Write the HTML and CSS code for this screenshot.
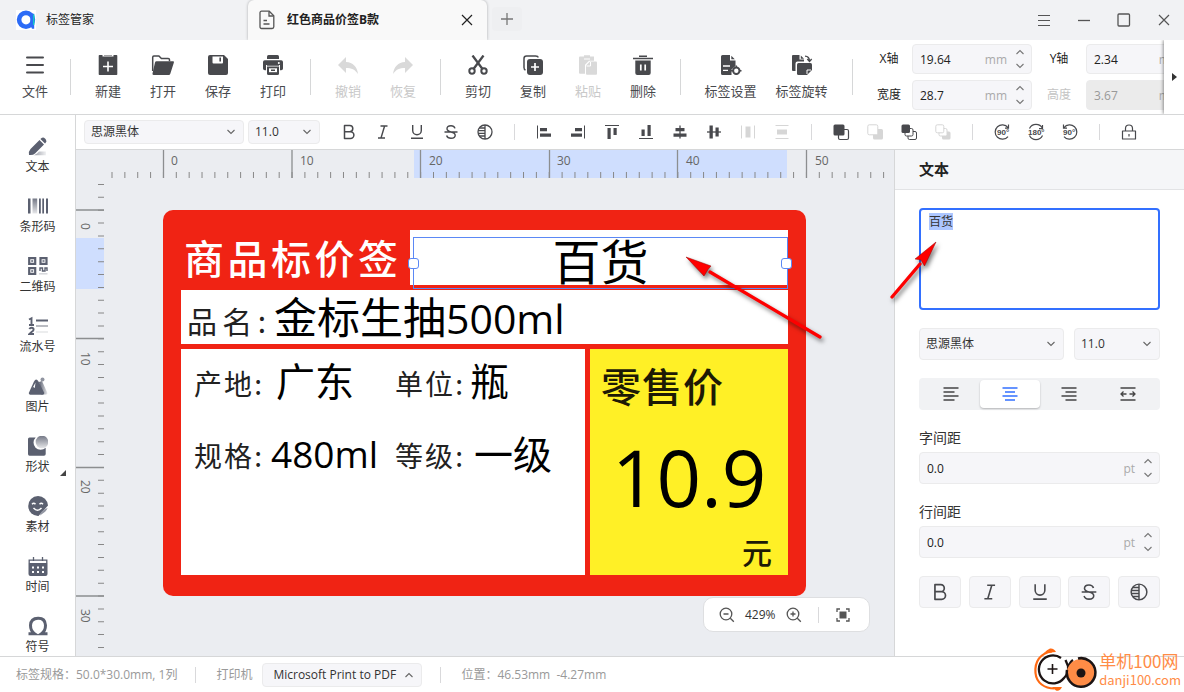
FILE: index.html
```html
<!DOCTYPE html>
<html lang="zh-CN">
<head>
<meta charset="utf-8">
<title>标签管家</title>
<link rel="stylesheet" href="styles.css">
</head>
<body>
<svg class="defs" aria-hidden="true">
  <defs>
    <linearGradient id="fade-x"><stop offset="0" stop-color="#5b6070"/><stop offset="1" stop-color="#5b6070" stop-opacity=".15"/></linearGradient>
    <linearGradient id="fade-y" x2="0" y2="1"><stop offset="0" stop-color="#5b6070" stop-opacity=".85"/><stop offset="1" stop-color="#5b6070" stop-opacity=".15"/></linearGradient>
  </defs>
  <symbol id="i-down" viewBox="0 0 10 6"><path d="M1.5 1 5 4.5 8.500 1" fill="none" stroke="currentColor" stroke-width="1.1"/></symbol>
  <symbol id="i-up" viewBox="0 0 10 6"><path d="M1.500 5 5 1.500 8.500 5" fill="none" stroke="currentColor" stroke-width="1.1"/></symbol>
  <symbol id="i-bold" viewBox="0 0 16 16"><path d="M3.500 1.500h5.200a3 3 0 0 1 0 6.200H3.500zM3.500 7.700h6a3.400 3.400 0 0 1 0 6.800h-6z" fill="none" stroke="currentColor" stroke-width="1.500" stroke-linejoin="round"/></symbol>
  <symbol id="i-italic" viewBox="0 0 16 16"><path d="M5.500 2h7M3 14h7M9.600 2 6 14" fill="none" stroke="currentColor" stroke-width="1.400"/></symbol>
  <symbol id="i-under" viewBox="0 0 16 16"><path d="M3.700 1v5.500a4.300 4.300 0 0 0 8.600 0V1M2 14.300h12" fill="none" stroke="currentColor" stroke-width="1.400"/></symbol>
  <symbol id="i-strike" viewBox="0 0 16 16"><path d="M12 4.400C11.400 2.600 9.900 1.700 8 1.700c-2.400 0-4 1.200-4 3.100 0 1.700 1.400 2.400 4 3.100M1.500 8h13M8 8c2.800.7 4.200 1.600 4.200 3.300 0 1.900-1.700 3-4.200 3-2.200 0-3.800-1-4.400-2.800" fill="none" stroke="currentColor" stroke-width="1.400"/></symbol>
  <symbol id="i-invert" viewBox="0 0 16 16"><circle cx="8" cy="8" r="7" fill="none" stroke="currentColor" stroke-width="1.300"/><path d="M8 1v14M2.500 4H8M1 6.700h7M1 9.400h7M2.500 12H8" fill="none" stroke="currentColor" stroke-width="1.300"/></symbol>
</svg>

<div class="app">
  <header class="titlebar">
    <div class="home-tab">
      <svg width="20" height="20" viewBox="0 0 20 20"><rect width="20" height="20" fill="#fff"/><circle cx="10" cy="9.800" r="6.900" fill="none" stroke="#2c6bf6" stroke-width="4.600"/><path d="M14.800 3.800h3.400v15h-2.200l-1.800-3.500z" fill="#2c6bf6"/><path d="M17 4.500h1.400V15H17z" fill="#14c8c4"/></svg>
      <span>标签管家</span>
    </div>
    <div class="doc-tab">
      <svg width="16" height="20" viewBox="0 0 16 20" fill="none" stroke="#555" stroke-width="1.300"><path d="M2.500 1.200h7.700l4.600 4.600v11a1.700 1.700 0 0 1-1.700 1.700H2.500A1.500 1.500 0 0 1 1 17V2.700a1.500 1.500 0 0 1 1.500-1.500z"/><path d="M10 1.500V6h4.500M4.500 10.500h3.500M4.500 14h6"/></svg>
      <span class="doc-name">红色商品价签B款</span>
      <button class="bare" aria-label="关闭标签"><svg width="12" height="12" viewBox="0 0 12 12"><path d="m1 1 10 10M11 1 1 11" stroke="#222" stroke-width="1.200"/></svg></button>
    </div>
    <button class="add-tab" aria-label="新标签"><svg width="12" height="12" viewBox="0 0 12 12"><path d="M6 0v12M0 6h12" stroke="#777" stroke-width="1.300"/></svg></button>
    <div class="win-controls">
      <button class="bare" aria-label="菜单"><svg width="12" height="12" viewBox="0 0 12 12"><path d="M0 1.500h12M0 6.500h12M0 11.500h12" stroke="#555" stroke-width="1.100"/></svg></button>
      <button class="bare" aria-label="最小化"><svg width="12" height="12" viewBox="0 0 12 12"><path d="M0 6.500h12" stroke="#555" stroke-width="1.300"/></svg></button>
      <button class="bare" aria-label="最大化"><svg width="14" height="14" viewBox="0 0 14 14"><rect x="1" y="1" width="11.500" height="12" rx="1" fill="none" stroke="#555" stroke-width="1.300"/></svg></button>
      <button class="bare" aria-label="关闭"><svg width="12" height="12" viewBox="0 0 12 12"><path d="m1 1 10 10M11 1 1 11" stroke="#555" stroke-width="1.200"/></svg></button>
    </div>
  </header>

  <div class="toolbar">
    <div class="toolbar-items">
      <button class="tool file"><svg viewBox="0 0 20 20"><path d="M2 2.500h16M2 10h16M2 17.500h16" stroke="currentColor" stroke-width="2" stroke-linecap="round"/></svg>文件</button>
      <i class="sep"></i>
      <div class="tools">
        <button class="tool"><svg viewBox="0 0 20 20"><path d="M1.500 0h3v1.600h11V0h3q.8 0 .8.800v18.400q0 .8-.8.800h-17q-.8 0-.8-.8V.8q0-.8.8-.8z" fill="currentColor"/><path d="M6 0h8" stroke="currentColor" stroke-width="1"/><path d="M10 6.500v10M5 11.500h10" stroke="#fff" stroke-width="1.600"/></svg>新建</button>
        <button class="tool"><svg viewBox="0 0 24 20"><path d="M1.700 16V2.200q0-1.200 1.200-1.200h5l2.500 2.500h6.800q1.300 0 1.300 1.300v1.500" fill="none" stroke="currentColor" stroke-width="1.500"/><path d="M5.500 6.200H22q1.300 0 .9 1.300l-3.600 11.200q-.4 1.200-1.500 1.200H2.500q-1.300 0-1-1.300L4 7.400q.3-1.200 1.500-1.200z" fill="currentColor"/></svg>打开</button>
        <button class="tool"><svg viewBox="0 0 20 20"><path d="M2 0h14l4 4v14q0 2-2 2H2q-2 0-2-2V2Q0 0 2 0z" fill="currentColor"/><path d="M4.500 1.500H15v6q0 1-1 1H5.500q-1 0-1-1z" fill="#fff"/><path d="M12.200 2.500v4" stroke="currentColor" stroke-width="1.600"/></svg>保存</button>
        <button class="tool"><svg viewBox="0 0 20 20"><path d="M4 4V1.500Q4 0 5.500 0h9Q16 0 16 1.500V4z" fill="currentColor"/><path d="M1.800 5.200h16.400Q20 5.200 20 7v6.500q0 1.800-1.800 1.800H17V10H3v5.300H1.800Q0 15.300 0 13.500V7q0-1.800 1.800-1.800z" fill="currentColor"/><path d="M4 11.500h12v7q0 1.500-1.500 1.500h-9Q4 20 4 18.500z" fill="currentColor"/><path d="M6 13.300h8v3.900H6z" fill="#fff"/><path d="M8 15.300h4M4 10h12" stroke="currentColor" stroke-width="1.400"/><circle cx="15.800" cy="8" r="1" fill="#fff"/></svg>打印</button>
      </div>
      <i class="sep"></i>
      <div class="tools">
        <button class="tool" disabled><svg viewBox="0 0 20 20"><path d="M8 2v5c7 .5 11 4.500 12 12-3-4.500-6.500-6-12-6v5L0 10z" fill="currentColor"/></svg>撤销</button>
        <button class="tool" disabled><svg viewBox="0 0 20 20"><path d="M12 2v5C5 7.500 1 11.500 0 19c3-4.500 6.500-6 12-6v5l8-8z" fill="currentColor"/></svg>恢复</button>
      </div>
      <i class="sep"></i>
      <div class="tools">
        <button class="tool"><svg viewBox="0 0 20 20" fill="none" stroke="currentColor"><circle cx="4" cy="16" r="2.700" stroke-width="2"/><circle cx="16" cy="16" r="2.700" stroke-width="2"/><path d="M5.500 14 15.500.5M14.500 14 4.500.5" stroke-width="2.300"/></svg>剪切</button>
        <button class="tool"><svg viewBox="0 0 20 20"><path d="M2.500 15Q1 14.500 1 12.500V3.500Q1 1 3.500 1h9Q15 1 15 2.500" fill="none" stroke="currentColor" stroke-width="1.500"/><rect x="4" y="4" width="16" height="16" rx="3" fill="currentColor"/><path d="M12 8v8M8 12h8" stroke="#fff" stroke-width="1.700"/></svg>复制</button>
        <button class="tool" disabled><svg viewBox="0 0 20 20"><path d="M2 1.500h4V.3h6v1.200h4v4.300h-5l-4 4v9H2q-1 0-1-1v-15q0-1.300 1-1.300z" fill="currentColor"/><path d="M12 6.500h6q1 0 1 1v11.200q0 1-1 1H9q-1 0-1-1v-8.200z" fill="currentColor"/><path d="M12.500 7v4H8.500M6 4h6" stroke="#fff" stroke-width="1" fill="none"/></svg>粘贴</button>
        <button class="tool"><svg viewBox="0 0 20 20"><path d="M0 2.700h20v1.600H0zM6 .5h8v1.500H6zM2.300 5.500h15.400V18q0 2-2 2H4.300q-2 0-2-2z" fill="currentColor"/><path d="M7.800 9.500v6M12.200 9.500v6" stroke="#fff" stroke-width="1.700"/></svg>删除</button>
      </div>
      <i class="sep"></i>
      <div class="tools flush">
        <button class="tool long"><svg viewBox="0 0 20 20"><path d="M1.500 0H9v5.500h5.500V11l-4 3.500v5.500h-9Q0 20 0 18.500v-17Q0 0 1.500 0zM10.300.8l3.500 3.500h-3.500z" fill="currentColor"/><path d="M2 11h7M2 15.300h5" stroke="#fff" stroke-width="1.300"/><circle cx="15.300" cy="15.700" r="3.200" fill="#fff" stroke="currentColor" stroke-width="2"/><path d="M15.300 10.500v2M15.300 19v1.500M10 15.700h2M18.500 15.700h2" stroke="currentColor" stroke-width="1.500"/></svg>标签设置</button>
        <button class="tool long"><svg viewBox="0 0 20 20"><path d="M1 0h6.500v4.500H12v2H5.500q-2 0-2 2V16H1q-1 0-1-1V1q0-1 1-1zM8.800.5 12 3.700H8.800z" fill="currentColor"/><path d="M13 1.200q4.500.3 4.500 5M15.300 4l2.200 2.500L19.700 4" fill="none" stroke="currentColor" stroke-width="1.300"/><path d="M6.500 8h12q1.500 0 1.500 1.500V15l-5 5H6.500Q5 20 5 18.500v-9Q5 8 6.500 8z" fill="currentColor"/><path d="M15 19v-4h4" fill="none" stroke="#fff" stroke-width="1"/></svg>标签旋转</button>
      </div>
      <i class="sep"></i>
      <div class="dims">
        <label for="dx">X轴</label>
        <div class="num"><input id="dx" value="19.64"><span class="unit">mm</span><span class="spin"><button aria-label="增加"><svg><use href="#i-up"/></svg></button><button aria-label="减少"><svg><use href="#i-down"/></svg></button></span></div>
        <label for="dy">Y轴</label>
        <div class="num"><input id="dy" value="2.34"><span class="unit">mm</span><span class="spin"><button aria-label="增加"><svg><use href="#i-up"/></svg></button><button aria-label="减少"><svg><use href="#i-down"/></svg></button></span></div>
        <label for="dw">宽度</label>
        <div class="num"><input id="dw" value="28.7"><span class="unit">mm</span><span class="spin"><button aria-label="增加"><svg><use href="#i-up"/></svg></button><button aria-label="减少"><svg><use href="#i-down"/></svg></button></span></div>
        <label for="dh" class="off">高度</label>
        <div class="num off"><input id="dh" value="3.67" disabled><span class="unit">mm</span><span class="spin"><button aria-label="增加" disabled><svg><use href="#i-up"/></svg></button><button aria-label="减少" disabled><svg><use href="#i-down"/></svg></button></span></div>
      </div>
    </div>
    <button class="more" aria-label="更多"><svg width="5" height="8" viewBox="0 0 5 8"><path d="M0 0v8l5-4z" fill="#333"/></svg></button>
  </div>

  <div class="body">
    <nav class="sidebar">
      <button><svg viewBox="0 0 20 20"><path d="M1 19q-.5-4 1.500-6L11.500 4 16 8.500l-9 9Q5 19.500 1 19zM13 2.600q2-2 4-.1l.7.7q1.700 2-.2 3.900L17 7.600 12.400 3z" fill="currentColor"/><path d="M9 17.500 11 15.500h7v3.700H6z" fill="url(#fade-x)" opacity=".6"/></svg>文本</button>
      <button><svg viewBox="0 0 20 20"><path d="M0 2.500h2.500v15H0zM11 2.500h1.800v15H11zM14.300 2.500h1.700v15h-1.700zM18 2.500h2v15h-2z" fill="currentColor"/><path d="M4.500 2.500h4.700v15H4.500z" fill="url(#fade-y)"/></svg>条形码</button>
      <button><svg viewBox="0 0 20 20"><path d="M1.200 2.200h6v5.600h-6zM12.500 2.200h6v5.600h-6zM1.200 12.200h6v5.600h-6z" fill="none" stroke="currentColor" stroke-width="2.200"/><path d="M3.200 4.200h2v1.600h-2zM14.500 4.200h2v1.600h-2zM3.200 14.200h2v1.600h-2z" fill="currentColor"/><path d="M12 15v-3h2.500v3h2.500v-3h2v3" fill="none" stroke="currentColor" stroke-width="1.400"/><path d="M11 17.800h8.500" stroke="currentColor" stroke-width="1.500" opacity=".25"/></svg>二维码</button>
      <button><svg viewBox="0 0 20 20"><path d="m1 3.500 2.500-1.300V9M1 9h5M1.300 13q.8-1.200 2.300-1.200 2 0 2 1.600 0 1.200-1.800 2.400L1.500 18H6" fill="none" stroke="currentColor" stroke-width="1.900"/><path d="M8 4.500h12" stroke="currentColor" stroke-width="2"/><path d="M8 10h12" stroke="currentColor" stroke-width="1.700" opacity=".5"/><path d="M8 16h12" stroke="currentColor" stroke-width="1.500" opacity=".15"/></svg>流水号</button>
      <button><svg viewBox="0 0 20 20"><circle cx="14.500" cy="3.500" r="2" fill="#9094a0"/><path d="m11 6 3-1 5 11q1 2.500-1 2.500h-5z" fill="url(#fade-x)"/><path d="M6 5.500Q8 1.500 10.500 5.500l5.500 11q.8 2-1.200 2.300H2.200Q.2 18.500 1 16.500z" fill="currentColor"/><path d="m4 13 3.500-6.500L6.800 12l-1.500-1z" fill="#fff"/></svg>图片</button>
      <button class="has-more"><svg viewBox="0 0 20 20"><path d="M1.500 1.500h6.200a7 7 0 0 0 10 10.300V18q0 1.700-1.700 1.700H1.500Q0 19.700 0 18V3q0-1.500 1.500-1.500z" fill="currentColor"/><circle cx="14" cy="6" r="6.300" fill="url(#fade-y)"/></svg>形状</button>
      <button><svg viewBox="0 0 20 20"><path d="M10 0a10 10 0 0 1 10 9.500L10.500 20A10 10 0 1 1 10 0z" fill="currentColor"/><path d="M12 19.500q.3-5 7.500-7.500-.5 3-7.500 7.500z" fill="#9296a2"/><path d="M4 8.200q1.800-2 3.500 0M11.500 8.200q1.800-2 3.500 0M5.500 12q4 4.500 8 0" fill="none" stroke="#fff" stroke-width="1.400"/></svg>素材</button>
      <button><svg viewBox="0 0 20 20"><path d="M1.200 7V4.200h17.600V7" fill="none" stroke="currentColor" stroke-width="1.300"/><path d="M5.500 1v4M14.500 1v4" stroke="currentColor" stroke-width="1.300"/><path d="M.5 7h19v11q0 2-2 2h-15q-2 0-2-2z" fill="currentColor"/><path d="M4 11.500h2M9 11.500h2M14 11.500h2M4 16h2M9 16h2M14 16h2" stroke="#fff" stroke-width="2"/></svg>时间</button>
      <button><svg viewBox="0 0 20 20"><path d="M.5 17.700h6Q2.500 15 2.500 9.300 2.800 2.500 10 2.300t7.500 7Q17.500 15 13.500 17.700h6" fill="none" stroke="currentColor" stroke-width="3"/></svg>符号</button>
    </nav>

    <main class="work">
      <div class="format-bar">
        <span class="pick family"><select aria-label="字体"><option>思源黑体</option></select><svg><use href="#i-down"/></svg></span>
        <span class="pick size"><select aria-label="字号"><option>11.0</option></select><svg><use href="#i-down"/></svg></span>
        <div class="fmt">
          <button aria-label="加粗"><svg><use href="#i-bold"/></svg></button>
          <button aria-label="斜体"><svg><use href="#i-italic"/></svg></button>
          <button aria-label="下划线"><svg><use href="#i-under"/></svg></button>
          <button aria-label="删除线"><svg><use href="#i-strike"/></svg></button>
          <button aria-label="反色"><svg><use href="#i-invert"/></svg></button>
        </div>
        <i class="bar"></i>
        <div class="fmt">
          <button aria-label="左对齐"><svg viewBox="0 0 16 16"><path d="M1.500 1.500v13" stroke="currentColor"/><path d="M4 4h7v3.300H4zM4 9.500h11v3.300H4z" fill="currentColor"/></svg></button>
          <button aria-label="右对齐"><svg viewBox="0 0 16 16"><path d="M14.500 1.500v13" stroke="currentColor"/><path d="M5 4h7v3.300H5zM1 9.500h11v3.300H1z" fill="currentColor"/></svg></button>
          <button aria-label="顶对齐"><svg viewBox="0 0 16 16"><path d="M1 1.500h14" stroke="currentColor"/><path d="M3.500 4h3.200v11H3.500zM9.500 4h3.200v7H9.500z" fill="currentColor"/></svg></button>
          <button aria-label="底对齐"><svg viewBox="0 0 16 16"><path d="M1 14.500h14" stroke="currentColor"/><path d="M3.500 5.500h3.200V12H3.500zM9.500 1h3.200v11H9.500z" fill="currentColor"/></svg></button>
          <button aria-label="水平居中"><svg viewBox="0 0 16 16"><path d="M8 1.500v13" stroke="currentColor" stroke-width="1.300"/><path d="M3.500 4h9v3.300h-9zM1.500 9.500h13v3.300h-13z" fill="currentColor"/></svg></button>
          <button aria-label="垂直居中"><svg viewBox="0 0 16 16"><path d="M1 8h14" stroke="currentColor" stroke-width="1.300"/><path d="M3.500 1.500h3.300v13H3.500zM9.500 3.500h3.200v9H9.500z" fill="currentColor"/></svg></button>
          <button aria-label="水平分布" disabled><svg viewBox="0 0 16 16"><path d="M1.500 1.500v13M14.500 1.500v13" stroke="currentColor"/><path d="M5.500 2.500h5v11h-5z" fill="currentColor"/></svg></button>
          <button aria-label="垂直分布" disabled><svg viewBox="0 0 16 16"><path d="M1.500 1.500h13M1.500 14.500h13" stroke="currentColor"/><path d="M3 5.500h10v5H3z" fill="currentColor"/></svg></button>
        </div>
        <i class="bar"></i>
        <div class="fmt">
          <button aria-label="置顶"><svg viewBox="0 0 16 16"><rect x="5.500" y="5.500" width="10" height="10" rx="1.500" fill="#fff" stroke="currentColor" stroke-width="1.200"/><rect x=".5" y=".5" width="11" height="11" rx="1.500" fill="currentColor"/></svg></button>
          <button aria-label="置底" disabled><svg viewBox="0 0 16 16"><rect x="6" y="5" width="10" height="10.500" rx="1.500" fill="currentColor"/><rect x=".8" y=".8" width="10" height="10" rx="1.500" fill="#fff" stroke="currentColor"/></svg></button>
          <button aria-label="上移一层"><svg viewBox="0 0 16 16"><rect x="7" y="7.500" width="8.500" height="8" rx="1.500" fill="#fff" stroke="currentColor"/><rect x="4" y="4.500" width="8" height="7.500" rx="1.500" fill="#fff" stroke="currentColor"/><rect x=".5" y=".5" width="8.500" height="8.500" rx="1.500" fill="currentColor"/></svg></button>
          <button aria-label="下移一层" disabled><svg viewBox="0 0 16 16"><rect x="7" y="7.500" width="8.500" height="8" rx="1.500" fill="currentColor"/><rect x="4" y="4.500" width="8" height="7.500" rx="1.500" fill="#fff" stroke="currentColor"/><rect x=".8" y=".8" width="8" height="8" rx="1.500" fill="#fff" stroke="currentColor"/></svg></button>
        </div>
        <i class="bar"></i>
        <div class="fmt">
          <button aria-label="旋转90度"><svg viewBox="0 0 16 16"><path d="M14 3.500A7.200 7.200 0 1 0 14 12.500M14.500.5v3.700h-3.500" fill="none" stroke="currentColor" stroke-width="1.200"/><text x="3" y="10.800" class="deg">90°</text></svg></button>
          <button aria-label="旋转180度"><svg viewBox="0 0 16 16"><path d="M14.500 4.500A7.200 7.200 0 0 0 1.500 4.500M1.500 11.500a7.200 7.200 0 0 0 13 0M14.500 1v3.700h-3.500" fill="none" stroke="currentColor" stroke-width="1.200"/><text x="0" y="10.800" class="deg">180°</text></svg></button>
          <button aria-label="逆时针旋转90度"><svg viewBox="0 0 16 16"><path d="M2 3.500A7.200 7.200 0 1 1 2 12.500M1.500.5v3.700H5" fill="none" stroke="currentColor" stroke-width="1.200"/><text x="1" y="10.800" class="deg">90°</text></svg></button>
        </div>
        <i class="bar"></i>
        <div class="fmt">
          <button aria-label="锁定"><svg viewBox="0 0 16 16"><path d="M1.500 7h13v8h-13zM4.500 7V4.500a3.500 3.500 0 0 1 7 0V7M8 10v2.500" fill="none" stroke="currentColor" stroke-width="1.200" stroke-linejoin="round"/></svg></button>
        </div>
      </div>

      <div class="split">
        <section class="stage">
          <svg class="ruler-x" height="28">
            <rect x="338" y="0" width="373" height="28" fill="#cfdefe"/>
            <path d="M35.500 25H812" stroke="#888" stroke-width="6" stroke-dasharray="1 11.860"/>
            <path d="M87.500 0v28M216 0v28M344.500 0v28M473.500 0v28M601.500 0v28M730.500 0v28" stroke="#8c8e90" stroke-width="1.300"/>
            <g class="tick"><text x="95" y="15">0</text><text x="224" y="15">10</text><text x="353" y="15">20</text><text x="481" y="15">30</text><text x="610" y="15">40</text><text x="739" y="15">50</text></g>
          </svg>
          <svg class="ruler-y" width="28">
            <rect x="0" y="60" width="28" height="51" fill="#cfdefe"/>
            <path d="M25 6v466" stroke="#888" stroke-width="6" stroke-dasharray="1 11.860"/>
            <path d="M0 32h28M0 160.500h28M0 289.500h28M0 418h28" stroke="#8c8e90" stroke-width="1.300"/>
            <g class="tick"><text transform="translate(5 45) rotate(90)">0</text><text transform="translate(5 174) rotate(90)">10</text><text transform="translate(5 302) rotate(90)">20</text><text transform="translate(5 431) rotate(90)">30</text></g>
          </svg>
          <div class="canvas">
            <div class="tag">
              <div class="box name-box"></div>
              <div class="box goods-box"></div>
              <div class="box info-box"></div>
              <div class="box price-box"></div>
              <div class="t heading">商品标价签</div>
              <div class="t cap goods-cap">品名:</div>
              <div class="t val goods">金标生抽<span>500ml</span></div>
              <div class="t cap small origin-cap">产地:</div>
              <div class="t val mid origin">广东</div>
              <div class="t cap small unit-cap">单位:</div>
              <div class="t val mid unit-val">瓶</div>
              <div class="t cap small spec-cap">规格:</div>
              <div class="t val mid spec"><span>480ml</span></div>
              <div class="t cap small grade-cap">等级:</div>
              <div class="t val mid grade">一级</div>
              <div class="t retail">零售价</div>
              <div class="t price">10.9</div>
              <div class="t yuan">元</div>
              <div class="t selected">百货<i class="handle left"></i><i class="handle right"></i></div>
            </div>
          </div>
          <div class="zoombar">
            <button class="bare" aria-label="缩小"><svg width="16" height="16" viewBox="0 0 16 16" fill="none" stroke="#555" stroke-width="1.300"><circle cx="7" cy="7" r="5.800"/><path d="M4.500 7h5M11.300 11.300l3.500 3.500"/></svg></button>
            <span>429%</span>
            <button class="bare" aria-label="放大"><svg width="16" height="16" viewBox="0 0 16 16" fill="none" stroke="#555" stroke-width="1.300"><circle cx="7" cy="7" r="5.800"/><path d="M4.500 7h5M7 4.500v5M11.300 11.300l3.500 3.500"/></svg></button>
            <i class="bar"></i>
            <button class="bare" aria-label="适应窗口"><svg width="14" height="14" viewBox="0 0 14 14"><path d="M1 4V1h3M10 1h3v3M13 10v3h-3M4 13H1v-3" fill="none" stroke="#555" stroke-width="1.300"/><path d="M3.500 3.500h7v7h-7z" fill="#555"/></svg></button>
          </div>
        </section>

        <aside class="panel">
          <h2>文本</h2>
          <div class="panel-body">
            <textarea id="content" aria-label="文本内容">百货</textarea>
            <div class="row">
              <span class="pick wide"><select aria-label="字体"><option>思源黑体</option></select><svg><use href="#i-down"/></svg></span>
              <span class="pick narrow"><select aria-label="字号"><option>11.0</option></select><svg><use href="#i-down"/></svg></span>
            </div>
            <div class="segment">
              <button aria-label="居左"><svg viewBox="0 0 16 16"><path d="M.5 2h15M.5 6h11M.5 10h15M.5 14h11" stroke="currentColor" stroke-width="1.300"/></svg></button>
              <button aria-label="居中" class="on"><svg viewBox="0 0 16 16"><path d="M.5 2h15M3 6h10M.5 10h15M3 14h10" stroke="currentColor" stroke-width="1.300"/></svg></button>
              <button aria-label="居右"><svg viewBox="0 0 16 16"><path d="M.5 2h15M4.500 6h11M.5 10h15M4.500 14h11" stroke="currentColor" stroke-width="1.300"/></svg></button>
              <button aria-label="两端"><svg viewBox="0 0 16 16"><path d="M.5 2h15M.5 14h15M1 8h5.500M9.500 8H15M3.500 5.500 1 8l2.500 2.500M12.500 5.500 15 8l-2.500 2.500" fill="none" stroke="currentColor" stroke-width="1.300"/></svg></button>
            </div>
            <div class="field">
              <label for="ls">字间距</label>
              <div class="num"><input id="ls" value="0.0"><span class="unit">pt</span><span class="spin"><button aria-label="增加"><svg><use href="#i-up"/></svg></button><button aria-label="减少"><svg><use href="#i-down"/></svg></button></span></div>
            </div>
            <div class="field">
              <label for="lh">行间距</label>
              <div class="num"><input id="lh" value="0.0"><span class="unit">pt</span><span class="spin"><button aria-label="增加"><svg><use href="#i-up"/></svg></button><button aria-label="减少"><svg><use href="#i-down"/></svg></button></span></div>
            </div>
            <div class="style-row">
              <button aria-label="加粗"><svg><use href="#i-bold"/></svg></button>
              <button aria-label="斜体"><svg><use href="#i-italic"/></svg></button>
              <button aria-label="下划线"><svg><use href="#i-under"/></svg></button>
              <button aria-label="删除线"><svg><use href="#i-strike"/></svg></button>
              <button aria-label="反色"><svg><use href="#i-invert"/></svg></button>
            </div>
          </div>
        </aside>
      </div>
    </main>
  </div>

  <footer class="status">
    <span>标签规格：50.0*30.0mm, 1列</span>
    <i class="bar"></i>
    <label for="printer">打印机</label>
    <span class="pick printer"><select id="printer"><option>Microsoft Print to PDF</option></select><svg><use href="#i-up"/></svg></span>
    <i class="bar"></i>
    <span>位置：46.53mm &nbsp;-4.27mm</span>
  </footer>

  <svg class="arrow arrow-a" width="150" height="100" viewBox="0 0 150 100">
    <path d="M30 22 140 87" stroke="#fe0000" stroke-width="3.300" stroke-linecap="round"/>
    <path d="M6 7 31 16 28 19.500 24 26z" fill="#fe0000" stroke="#900" stroke-width=".5"/>
  </svg>
  <svg class="arrow arrow-b" width="60" height="70" viewBox="0 0 60 70">
    <path d="M40 24 12 57" stroke="#fe0000" stroke-width="3.300" stroke-linecap="round"/>
    <path d="M56 2 35 19 41 20 44.500 26z" fill="#fe0000" stroke="#900" stroke-width=".5"/>
  </svg>

  <div class="mark">
    <svg width="64" height="44" viewBox="0 0 64 44" fill="none">
      <path d="M19 3.500C7 5 1.500 14 2.500 25c1 10 9 15.500 19 15.500" stroke="#ff6a13" stroke-width="2.200"/>
      <path d="M11 5q3-3.500 6-4.500 4-.5 6 3.500zM19 39h10q-2 4.500-6 3.500z" fill="#ff6a13"/>
      <path d="M28 10A14 14 0 1 0 31 30Q36 25 35 18L32.500 12M35 21q1-6 5-9" stroke="#1c1414" stroke-width="2.300"/>
      <path d="M19.500 16v10M14.500 21h10" stroke="#1c1414" stroke-width="1.600"/>
      <circle cx="48" cy="25" r="14" fill="#ff8c46"/>
      <path d="M45 10.500A14.300 14.300 0 1 1 34 22" stroke="#1c1414" stroke-width="2.500"/>
      <circle cx="48" cy="25" r="4.500" fill="#1c1414"/>
    </svg>
    <div class="mark-text"><b>单机100网</b><span>danji100.com</span></div>
  </div>
</div>
<script src="app.js"></script>
</body>
</html>
```

FILE: styles.css
```css
* { box-sizing: border-box; }
body {
  margin: 0;
  font: 12px/18px "Open Sans", "Noto Sans CJK SC", sans-serif;
  color: #333;
  background: #fff;
}
button, input, select, textarea { font: inherit; color: inherit; margin: 0; }
button { border: 0; padding: 0; background: none; }
i { font-style: normal; }
.defs { position: absolute; width: 0; height: 0; }
.app {
  position: relative;
  display: flex;
  flex-direction: column;
  height: 100vh;
  overflow: hidden;
}
.bare { display: flex; align-items: center; justify-content: center; }
.bar { width: 1px; height: 16px; background: #d9d9db; flex: none; }

/* Title bar */
.titlebar { display: flex; height: 40px; flex: none; background: #f1f2f4; color: #222; }
.home-tab { display: flex; align-items: center; gap: 10px; width: 248px; padding-left: 16px; }
.doc-tab {
  display: flex;
  align-items: center;
  width: 239px;
  padding: 0 14px 0 11px;
  gap: 12px;
  background: #f9f9f9;
  border-radius: 6px 6px 0 0;
  box-shadow: 0 0 3px rgba(0, 0, 0, .3);
  clip-path: inset(0 -4px);
}
.doc-name { flex: 1; font-weight: 700; }
.add-tab {
  display: flex;
  align-items: center;
  justify-content: center;
  width: 30px;
  height: 24px;
  margin: 7px 0 0 5px;
  border-radius: 4px;
  background: #eeeff1;
}
.win-controls { display: flex; margin-left: auto; }
.win-controls button { width: 40px; }

/* Main toolbar */
.toolbar { display: flex; height: 75px; flex: none; border-bottom: 1px solid #d6d7d8; }
.toolbar-items { display: flex; flex: 1; min-width: 0; overflow: hidden; align-items: center; }
.tool {
  display: flex;
  flex-direction: column;
  align-items: center;
  gap: 7px;
  width: 54px;
  font-size: 13px;
  line-height: 18px;
  color: #48494d;
  flex: none;
}
.tool svg { width: 24px; height: 20px; }
.tool.file { width: 70px; }
.tool.long { width: 71px; }
.tool:disabled { color: #c9c9c9; }
.tool:disabled svg { color: #d9d9d9; }
.tools { display: flex; gap: 1px; margin: 0 10px; flex: none; }
.tools.flush { gap: 0; margin: 0 15px 0 14px; }
.sep { width: 1px; height: 36px; background: #d6d7d8; flex: none; }
.dims {
  display: grid;
  grid-template-columns: 46px 120px 54px 120px;
  gap: 6px 0;
  margin-left: 13px;
  flex: none;
  align-items: center;
}
.dims label { text-align: center; color: #222; }
.dims .num { height: 30px; }
.dims label.off { color: #c4c4c4; }
.more {
  display: flex;
  align-items: center;
  justify-content: center;
  width: 20px;
  background: #fff;
  box-shadow: -1px 0 3px rgba(0, 0, 0, .4);
  clip-path: inset(0 0 0 -5px);
}

.num {
  display: flex;
  align-items: center;
  height: 32px;
  border: 1px solid #ebebec;
  border-radius: 4px;
  background: #f6f6f9;
}
.num input {
  flex: 1;
  min-width: 0;
  width: 0;
  padding: 1px 0 0 7px;
  border: 0;
  background: none;
  outline: 0;
  color: #222;
}
.unit { padding-top: 1px; color: #aaa; }
.spin { display: flex; flex-direction: column; margin: 0 6px 0 8px; gap: 8px; }
.spin button { display: flex; color: #777; }
.spin svg { width: 10px; height: 6px; }
.num.off { background: #ebebeb; }
.num.off input { color: #999; }

.pick {
  position: relative;
  display: flex;
  align-items: center;
  height: 24px;
  border: 1px solid #ebebec;
  border-radius: 4px;
  background: #f6f6f9;
  color: #333;
}
.pick select {
  appearance: none;
  width: 100%;
  height: 100%;
  padding: 0 20px 0 6px;
  border: 0;
  background: none;
}
.pick svg {
  position: absolute;
  right: 7px;
  top: calc(50% - 3px);
  width: 10px;
  height: 6px;
  color: #666;
  pointer-events: none;
}

/* Element palette */
.body { display: flex; flex: 1; min-height: 0; }
.sidebar {
  display: flex;
  flex-direction: column;
  gap: 20px;
  width: 76px;
  padding-top: 21px;
  border-right: 1px solid #d6d7d8;
  flex: none;
  overflow: hidden;
}
.sidebar button {
  position: relative;
  display: flex;
  flex-direction: column;
  align-items: center;
  gap: 2px;
  flex: none;
}
.sidebar svg { width: 20px; height: 20px; color: #5b6070; }
.has-more::after {
  content: "";
  position: absolute;
  right: 9px;
  bottom: 0;
  border: 3px solid transparent;
  border-right-color: #444;
  border-bottom-color: #444;
}

/* Format bar */
.work { display: flex; flex-direction: column; flex: 1; min-width: 0; }
.format-bar {
  display: flex;
  align-items: center;
  height: 35px;
  padding-left: 8px;
  border-bottom: 1px solid #d6d7d8;
  flex: none;
}
.format-bar .family { width: 160px; margin-right: 4px; }
.format-bar .size { width: 72px; margin-right: 12px; }
.format-bar .bar { margin: 0 12px; }
.fmt { display: flex; }
.fmt button { display: flex; justify-content: center; width: 34px; color: #48494d; }
.fmt svg { width: 16px; height: 16px; overflow: visible; }
.fmt button:disabled { color: #d6d6d6; }
.deg { font: 700 8px "Liberation Sans", sans-serif; fill: currentColor; }

/* Design area */
.split { display: flex; flex: 1; min-height: 0; }
.stage {
  position: relative;
  display: grid;
  grid-template: 28px 1fr / 28px 1fr;
  flex: 1;
  min-width: 0;
  background: #ebedf1;
  overflow: hidden;
}
.ruler-x { grid-column: 1 / 3; width: 100%; }
.ruler-y { height: 100%; }
.tick { font: 12px "Open Sans", sans-serif; fill: #666; }
.canvas { position: relative; }
.tag {
  position: absolute;
  left: 59px;
  top: 32px;
  width: 643px;
  height: 386px;
  border-radius: 10px;
  background: #f02314;
}
.box { position: absolute; background: #fff; }
.name-box { left: 247px; top: 20px; width: 378px; height: 55px; }
.goods-box { left: 18px; top: 80px; width: 607px; height: 54px; }
.info-box { left: 18px; top: 139px; width: 404px; height: 226px; }
.price-box { left: 427px; top: 139px; width: 198px; height: 226px; background: #fff026; }
.t { position: absolute; white-space: nowrap; color: #000; }
.heading {
  left: 21px;
  top: 21px;
  width: 214px;
  font-size: 40px;
  line-height: 56px;
  font-weight: 500;
  color: #fff;
  text-align-last: justify;
}
.cap {
  width: 79px;
  font-family: "Noto Sans CJK SC", sans-serif;
  font-size: 30px;
  line-height: 40px;
  color: #222;
  text-align-last: justify;
}
.cap.small { width: 68px; font-size: 28px; }
.val { font-size: 43px; line-height: 50px; }
.val.mid { font-size: 39px; }
.val span { font-size: 41px; }
.val.mid span { font-size: 37px; }
.goods-cap { left: 24px; top: 90px; }
.goods { left: 111px; top: 83px; }
.origin-cap { left: 31px; top: 153px; }
.origin { left: 113px; top: 146px; }
.unit-cap { left: 232px; top: 153px; }
.unit-val { left: 307px; top: 146px; }
.spec-cap { left: 31px; top: 225px; }
.spec { left: 108px; top: 218px; }
.grade-cap { left: 232px; top: 225px; }
.grade { left: 311px; top: 219px; }
.retail {
  left: 438px;
  top: 149px;
  width: 122px;
  font-size: 40px;
  line-height: 56px;
  font-weight: 500;
  color: #1d1a05;
  text-align-last: justify;
}
.price { left: 449px; top: 212px; font-size: 78px; line-height: 110px; }
.yuan { left: 579px; top: 322px; font-size: 30px; line-height: 42px; font-weight: 500; color: #1d1a05; }
.selected {
  left: 250px;
  top: 27px;
  width: 375px;
  height: 52px;
  border: 1px solid #5b88f5;
  font-size: 48px;
  line-height: 48px;
  text-align: center;
}
.handle {
  position: absolute;
  top: 20px;
  width: 11px;
  height: 11px;
  border: 1px solid #5b88f5;
  border-radius: 3px;
  background: #fff;
}
.handle.left { left: -6px; }
.handle.right { right: -5px; }
.zoombar {
  position: absolute;
  right: 24px;
  bottom: 24px;
  display: flex;
  align-items: center;
  width: 167px;
  height: 35px;
  padding: 0 15px;
  gap: 10px;
  border: 1px solid #dedfe1;
  border-radius: 10px;
  background: #fff;
}
.zoombar .bar { margin: 0 7px 0 6px; }

/* Property panel */
.panel { width: 290px; border-left: 1px solid #d6d7d8; flex: none; background: #fff; }
.panel h2 {
  margin: 0;
  height: 40px;
  padding-left: 24px;
  border-bottom: 1px solid #e2e3e5;
  background: #f5f6f8;
  font-size: 15px;
  line-height: 39px;
  color: #222;
}
.panel-body { display: flex; flex-direction: column; gap: 18px; padding: 18px 24px; }
textarea {
  display: block;
  width: 100%;
  height: 102px;
  padding: 4px 8px;
  border: 2px solid #3370ff;
  border-radius: 4px;
  outline: 0;
  resize: none;
  line-height: 16px;
}
textarea::selection { background: #adc6ff; color: #333; }
.row { display: flex; gap: 10px; }
.row .pick { height: 32px; }
.wide { flex: 1; }
.narrow { width: 86px; }
.segment { display: flex; height: 32px; border-radius: 4px; background: #f1f2f4; padding: 2px; }
.segment button {
  display: flex;
  align-items: center;
  justify-content: center;
  flex: 1;
  border-radius: 4px;
  color: #444;
}
.segment .on { background: #fff; color: #3370ff; box-shadow: 0 1px 2px rgba(0, 0, 0, .25); }
.segment svg, .style-row svg { width: 16px; height: 16px; }
.field { display: flex; flex-direction: column; gap: 4px; }
.field label { font-size: 14px; line-height: 20px; }
.style-row { display: flex; justify-content: space-between; }
.style-row button {
  display: flex;
  align-items: center;
  justify-content: center;
  width: 42px;
  height: 32px;
  border: 1px solid #ebebec;
  border-radius: 4px;
  background: #f6f6f9;
  color: #48494d;
}
.style-row svg { width: 18px; height: 18px; }

/* Status bar */
.status {
  display: flex;
  align-items: center;
  height: 36px;
  padding-left: 16px;
  border-top: 1px solid #d6d7d8;
  color: #999;
  flex: none;
}
.status .bar { margin: 0 20px 0 18px; }
.printer { width: 160px; margin-left: 10px; }
.printer select { padding-left: 10px; }

/* Pointer arrows and site mark */
.arrow { position: absolute; overflow: visible; filter: drop-shadow(2px 3px 2px rgba(0, 0, 0, .5)); pointer-events: none; }
.arrow-a { left: 680px; top: 250px; }
.arrow-b { left: 880px; top: 240px; }
.mark { position: absolute; right: 3px; bottom: 0; display: flex; align-items: center; gap: 2px; color: #ff8c46; }
.mark-text { display: flex; flex-direction: column; }
.mark-text b { font: 400 17px/20px "Noto Sans CJK SC", sans-serif; }
.mark-text span { font: 13px/18px "Noto Sans CJK SC", sans-serif; }
```

FILE: app.js
```js
const content = document.getElementById("content");
content.focus();
content.select();
```
